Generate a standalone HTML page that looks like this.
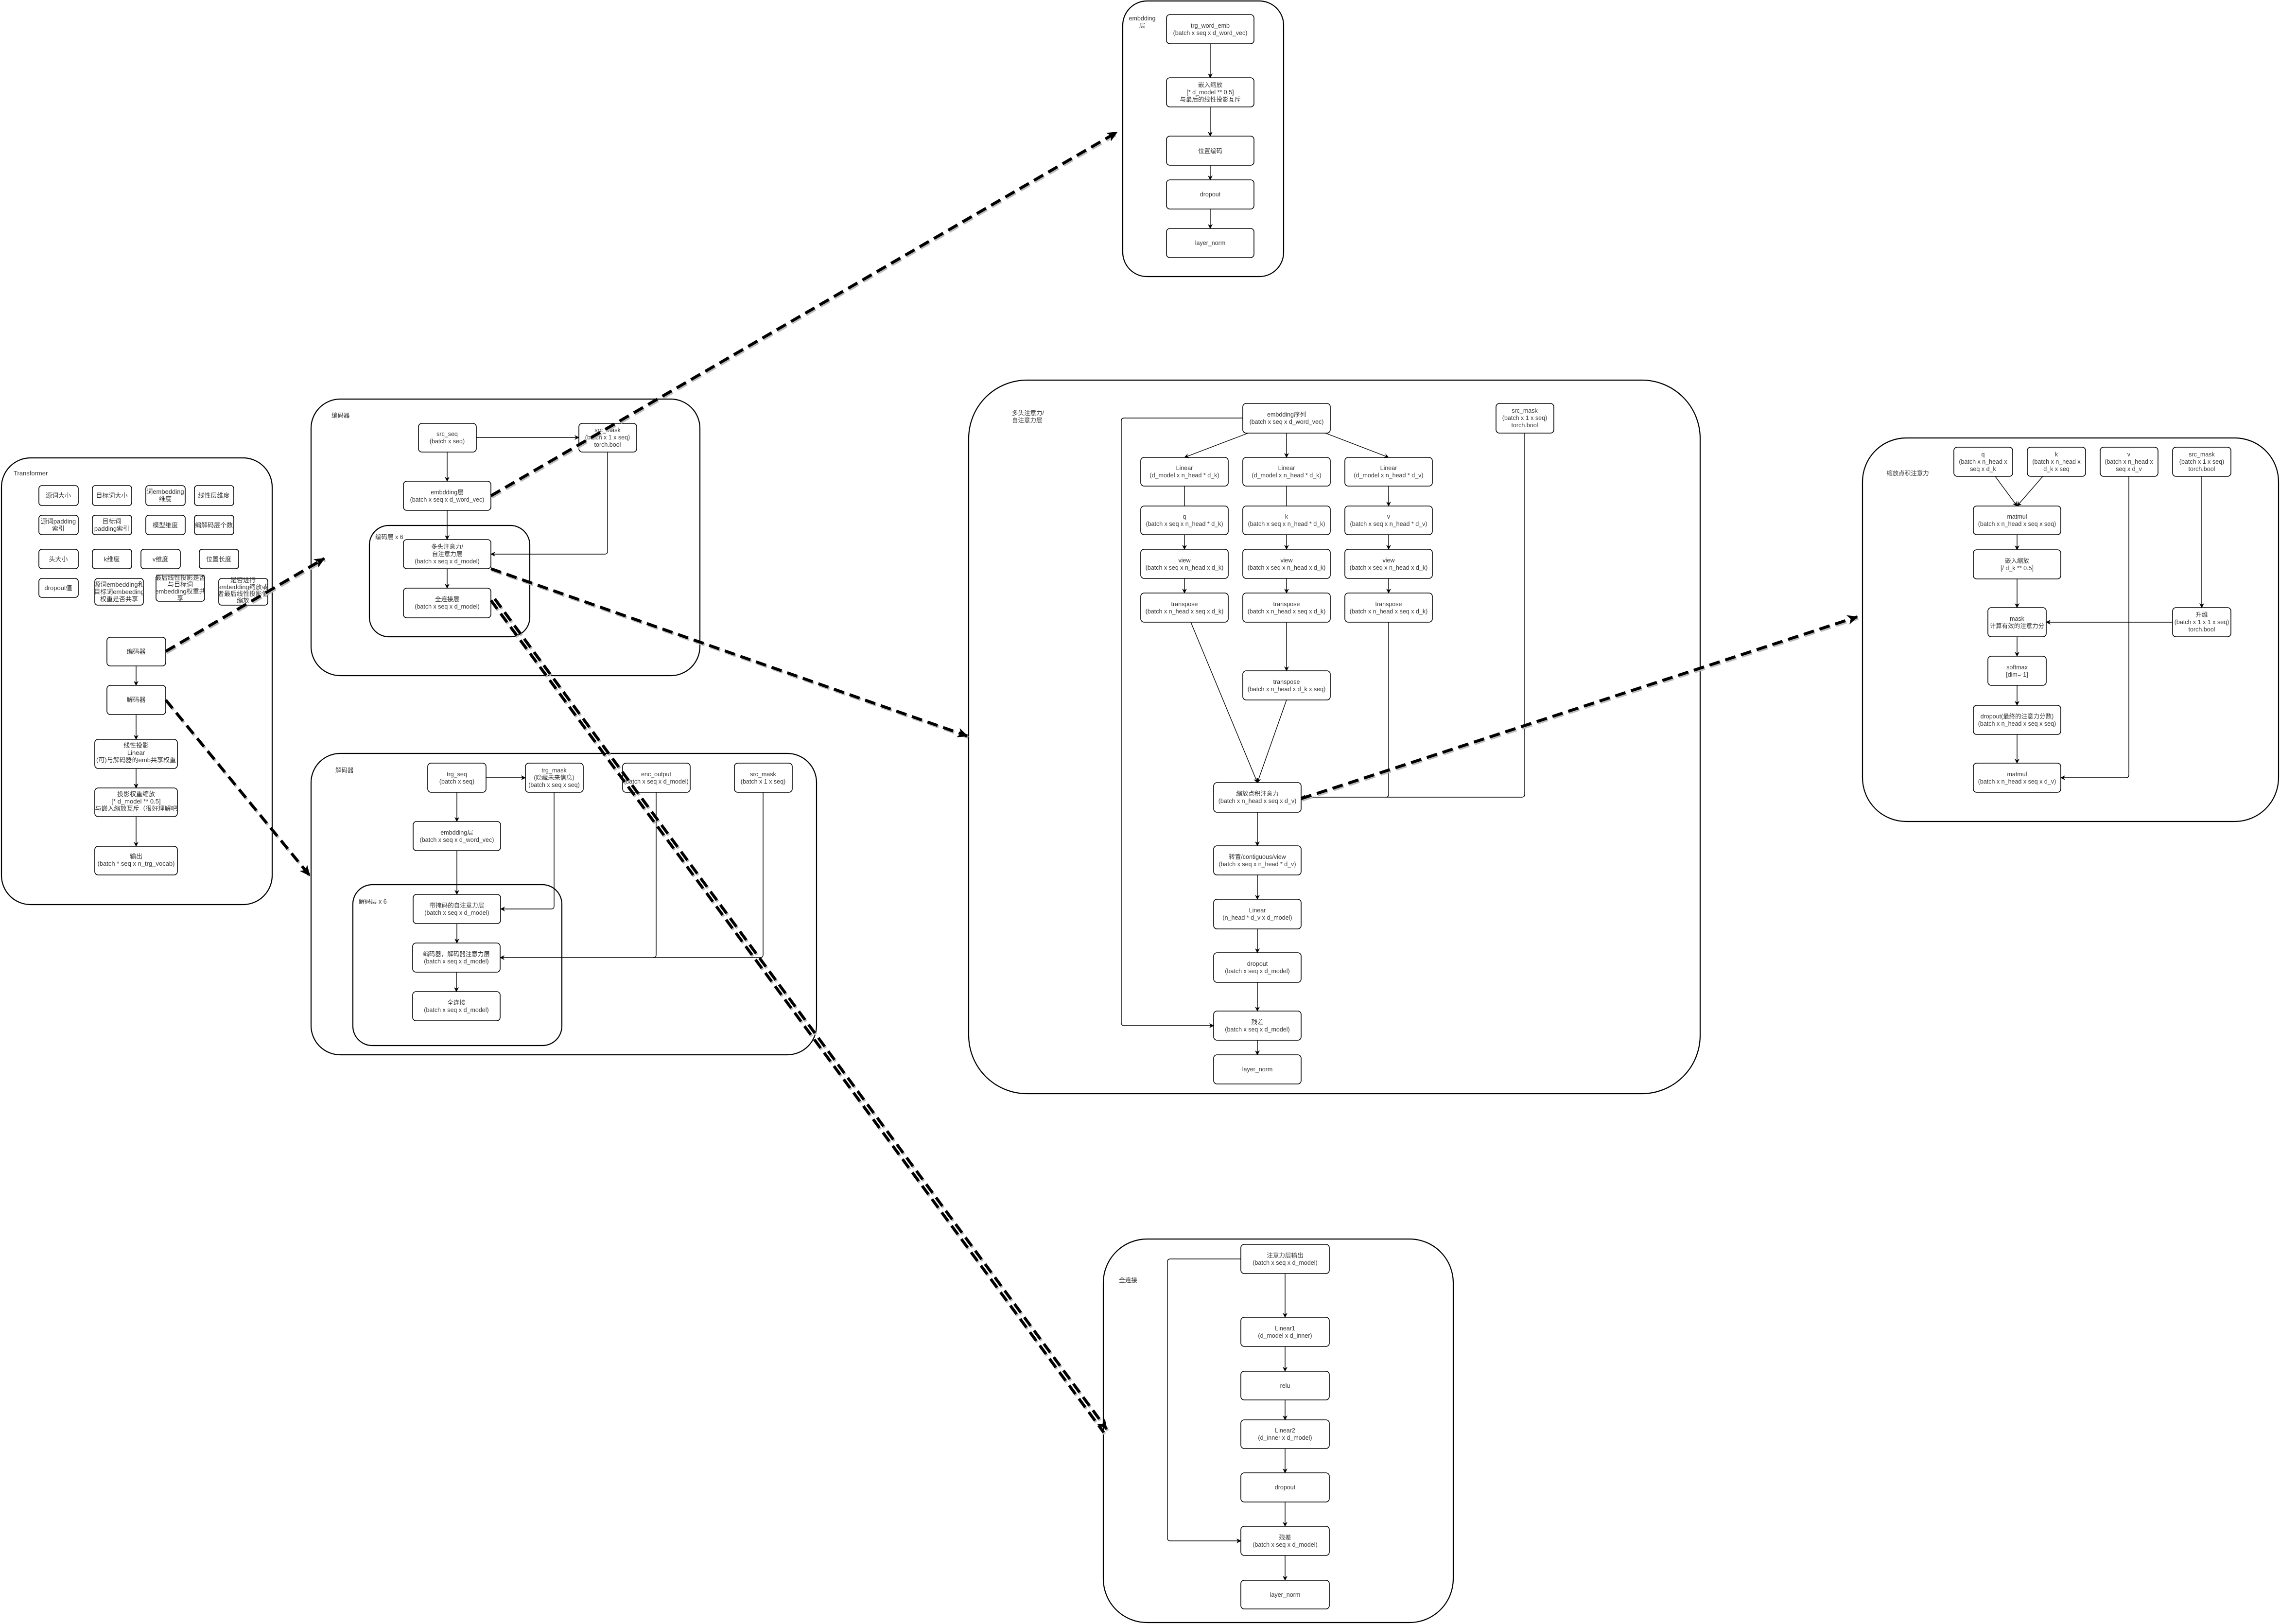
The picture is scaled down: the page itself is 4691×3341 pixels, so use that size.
<!DOCTYPE html>
<html><head><meta charset="utf-8">
<style>
html,body{margin:0;padding:0;background:#fff;}
svg{display:block;}
text{font-family:"Liberation Sans","Noto Sans CJK SC",sans-serif;fill:#333;}
.b{fill:#fff;stroke:#000;stroke-width:1.6;}
.p{fill:none;stroke:#000;stroke-width:2.2;}
.l{fill:none;stroke:#000;stroke-width:1.4;}
.d{fill:none;stroke:#000;stroke-width:6;stroke-dasharray:22 12;}
.ds{fill:none;stroke:#bbb;stroke-width:6;stroke-dasharray:22 12;}
</style></head><body>
<svg width="4691" height="3341" xmlns="http://www.w3.org/2000/svg">
<defs>
<marker id="a" markerWidth="10" markerHeight="10" refX="9" refY="5" orient="auto" markerUnits="userSpaceOnUse"><path d="M0,0 L10,5 L0,10 L3,5 z" fill="#000"/></marker>
<marker id="A" markerWidth="24" markerHeight="24" refX="20" refY="12" orient="auto" markerUnits="userSpaceOnUse"><path d="M0,2 L22,12 L0,22 L6,12 z" fill="#000"/></marker>
</defs>
<g font-size="12.5" text-anchor="middle">

<!-- Transformer panel -->
<rect class="p" x="3" y="942" width="557" height="919" rx="60"/>
<text x="28" y="978" text-anchor="start" font-size="13">Transformer</text>
<g font-size="13">
<rect class="b" x="80" y="999" width="81" height="41" rx="6"/><text x="120" y="1024">源词大小</text>
<rect class="b" x="190" y="999" width="81" height="41" rx="6"/><text x="230" y="1024">目标词大小</text>
<rect class="b" x="300" y="999" width="81" height="41" rx="6"/><text x="340" y="1016">词embedding</text><text x="340" y="1031">维度</text>
<rect class="b" x="400" y="999" width="81" height="41" rx="6"/><text x="440" y="1024">线性层维度</text>
<rect class="b" x="80" y="1060" width="81" height="40" rx="6"/><text x="120" y="1077">源词padding</text><text x="120" y="1092">索引</text>
<rect class="b" x="190" y="1060" width="81" height="40" rx="6"/><text x="230" y="1077">目标词</text><text x="230" y="1092">padding索引</text>
<rect class="b" x="300" y="1060" width="81" height="40" rx="6"/><text x="340" y="1085">模型维度</text>
<rect class="b" x="400" y="1060" width="81" height="40" rx="6"/><text x="440" y="1085">编解码层个数</text>
<rect class="b" x="80" y="1130" width="81" height="40" rx="6"/><text x="120" y="1155">头大小</text>
<rect class="b" x="190" y="1130" width="81" height="40" rx="6"/><text x="230" y="1155">k维度</text>
<rect class="b" x="290" y="1130" width="81" height="40" rx="6"/><text x="330" y="1155">v维度</text>
<rect class="b" x="410" y="1130" width="81" height="40" rx="6"/><text x="450" y="1155">位置长度</text>
<rect class="b" x="80" y="1190" width="81" height="39" rx="6"/><text x="120" y="1214">dropout值</text>
<rect class="b" x="195" y="1190" width="100" height="55" rx="6"/><text x="245" y="1207">源词embedding和</text><text x="245" y="1222">目标词embeeding</text><text x="245" y="1237">权重是否共享</text>
<rect class="b" x="321" y="1183" width="100" height="54" rx="6"/><text x="371" y="1193">最后线性投影是否</text><text x="371" y="1207">与目标词</text><text x="371" y="1221">embedding权重共</text><text x="371" y="1235">享</text>
<rect class="b" x="450" y="1190" width="101" height="55" rx="6"/><text x="500" y="1198">是否进行</text><text x="500" y="1212">embedding缩放或</text><text x="500" y="1226">者最后线性投影值</text><text x="500" y="1240">缩放</text>
<rect class="b" x="220" y="1311" width="121" height="59" rx="7"/><text x="280" y="1345">编码器</text>
<rect class="b" x="220" y="1410" width="121" height="60" rx="7"/><text x="280" y="1444">解码器</text>
<rect class="b" x="195" y="1521" width="170" height="60" rx="7"/><text x="280" y="1538">线性投影</text><text x="280" y="1553">Linear</text><text x="280" y="1568">(可)与解码器的emb共享权重</text>
<rect class="b" x="195" y="1621" width="170" height="59" rx="7"/><text x="280" y="1638">投影权重缩放</text><text x="280" y="1653">[* d_model ** 0.5]</text><text x="280" y="1668">与嵌入缩放互斥（很好理解吧</text>
<rect class="b" x="195" y="1741" width="170" height="59" rx="7"/><text x="280" y="1766">输出</text><text x="280" y="1781">(batch * seq x n_trg_vocab)</text>
</g>
<path class="l" marker-end="url(#a)" d="M280,1370 V1410"/>
<path class="l" marker-end="url(#a)" d="M280,1470 V1521"/>
<path class="l" marker-end="url(#a)" d="M280,1581 V1621"/>
<path class="l" marker-end="url(#a)" d="M280,1680 V1741"/>

<!-- Encoder panel -->
<rect class="p" x="640" y="821" width="800" height="569" rx="60"/>
<text x="682" y="859" text-anchor="start">编码器</text>
<rect class="b" x="861" y="871" width="119" height="59" rx="7"/><text x="920" y="897">src_seq</text><text x="920" y="912">(batch x seq)</text>
<rect class="b" x="1191" y="871" width="119" height="59" rx="7"/><text x="1250" y="889">src_mask</text><text x="1250" y="904">(batch x 1 x seq)</text><text x="1250" y="919">torch.bool</text>
<rect class="b" x="830" y="990" width="180" height="60" rx="7"/><text x="920" y="1017">embdding层</text><text x="920" y="1032">(batch x seq x d_word_vec)</text>
<rect class="p" x="760" y="1081" width="330" height="229" rx="40"/>
<text x="772" y="1109" text-anchor="start">编码层 x 6</text>
<rect class="b" x="830" y="1110" width="180" height="60" rx="7"/><text x="920" y="1129">多头注意力/</text><text x="920" y="1144">自注意力层</text><text x="920" y="1159">(batch x seq x d_model)</text>
<rect class="b" x="830" y="1210" width="180" height="61" rx="7"/><text x="920" y="1237">全连接层</text><text x="920" y="1252">(batch x seq x d_model)</text>
<path class="l" marker-end="url(#a)" d="M980,900 H1191"/>
<path class="l" marker-end="url(#a)" d="M920,930 V990"/>
<path class="l" marker-end="url(#a)" d="M920,1050 V1110"/>
<path class="l" marker-end="url(#a)" d="M1250,930 V1134 Q1250,1140 1244,1140 H1010"/>
<path class="l" marker-end="url(#a)" d="M920,1170 V1210"/>

<!-- Decoder panel -->
<rect class="p" x="640" y="1550" width="1040" height="620" rx="60"/>
<text x="690" y="1589" text-anchor="start">解码器</text>
<rect class="b" x="880" y="1570" width="120" height="60" rx="7"/><text x="940" y="1597">trg_seq</text><text x="940" y="1612">(batch x seq)</text>
<rect class="b" x="1081" y="1570" width="119" height="60" rx="7"/><text x="1140" y="1589">trg_mask</text><text x="1140" y="1604">(隐藏未来信息)</text><text x="1140" y="1619">(batch x seq x seq)</text>
<rect class="b" x="1281" y="1570" width="139" height="60" rx="7"/><text x="1350" y="1597">enc_output</text><text x="1350" y="1612">(batch x seq x d_model)</text>
<rect class="b" x="1511" y="1570" width="119" height="60" rx="7"/><text x="1570" y="1597">src_mask</text><text x="1570" y="1612">(batch x 1 x seq)</text>
<rect class="b" x="850" y="1690" width="180" height="60" rx="7"/><text x="940" y="1717">embdding层</text><text x="940" y="1732">(batch x seq x d_word_vec)</text>
<rect class="p" x="726" y="1820" width="430" height="331" rx="40"/>
<text x="738" y="1859" text-anchor="start">解码层 x 6</text>
<rect class="b" x="850" y="1840" width="180" height="60" rx="7"/><text x="940" y="1867">带掩码的自注意力层</text><text x="940" y="1882">(batch x seq x d_model)</text>
<rect class="b" x="849" y="1940" width="180" height="60" rx="7"/><text x="939" y="1967">编码器，解码器注意力层</text><text x="939" y="1982">(batch x seq x d_model)</text>
<rect class="b" x="849" y="2040" width="180" height="60" rx="7"/><text x="939" y="2067">全连接</text><text x="939" y="2082">(batch x seq x d_model)</text>
<path class="l" marker-end="url(#a)" d="M1000,1600 H1081"/>
<path class="l" marker-end="url(#a)" d="M940,1630 V1690"/>
<path class="l" marker-end="url(#a)" d="M940,1750 V1840"/>
<path class="l" marker-end="url(#a)" d="M1140,1630 V1864 Q1140,1870 1134,1870 H1030"/>
<path class="l" marker-end="url(#a)" d="M940,1900 V1940"/>
<path class="l" d="M1350,1630 V1964 Q1350,1970 1344,1970"/>
<path class="l" marker-end="url(#a)" d="M1570,1630 V1964 Q1570,1970 1564,1970 H1029"/>
<path class="l" marker-end="url(#a)" d="M939,2000 V2040"/>

<!-- Embedding panel -->
<rect class="p" x="2310" y="2" width="331" height="567" rx="50"/>
<text x="2350" y="42">embdding</text><text x="2350" y="57">层</text>
<rect class="b" x="2400" y="30" width="180" height="60" rx="7"/><text x="2490" y="57">trg_word_emb</text><text x="2490" y="72">(batch x seq x d_word_vec)</text>
<rect class="b" x="2400" y="160" width="180" height="60" rx="7"/><text x="2490" y="179">嵌入缩放</text><text x="2490" y="194">[* d_model ** 0.5]</text><text x="2490" y="209">与最后的线性投影互斥</text>
<rect class="b" x="2400" y="280" width="180" height="60" rx="7"/><text x="2490" y="315">位置编码</text>
<rect class="b" x="2400" y="370" width="180" height="60" rx="7"/><text x="2490" y="404">dropout</text>
<rect class="b" x="2400" y="470" width="180" height="60" rx="7"/><text x="2490" y="504">layer_norm</text>
<path class="l" marker-end="url(#a)" d="M2490,90 V160"/>
<path class="l" marker-end="url(#a)" d="M2490,220 V280"/>
<path class="l" marker-end="url(#a)" d="M2490,340 V370"/>
<path class="l" marker-end="url(#a)" d="M2490,430 V470"/>

<!-- Multihead panel -->
<rect class="p" x="1993" y="782" width="1505" height="1468" rx="120"/>
<text x="2082" y="854" text-anchor="start">多头注意力/</text>
<text x="2082" y="869" text-anchor="start">自注意力层</text>
<rect class="b" x="2557" y="830" width="180" height="61" rx="7"/><text x="2647" y="857">embdding序列</text><text x="2647" y="872">(batch x seq x d_word_vec)</text>
<rect class="b" x="3078" y="830" width="119" height="61" rx="7"/><text x="3137" y="849">src_mask</text><text x="3137" y="864">(batch x 1 x seq)</text><text x="3137" y="879">torch.bool</text>
<rect class="b" x="2347" y="941" width="180" height="59" rx="7"/><text x="2437" y="967">Linear</text><text x="2437" y="982">(d_model x n_head * d_k)</text>
<rect class="b" x="2557" y="941" width="180" height="59" rx="7"/><text x="2647" y="967">Linear</text><text x="2647" y="982">(d_model x n_head * d_k)</text>
<rect class="b" x="2767" y="941" width="180" height="59" rx="7"/><text x="2857" y="967">Linear</text><text x="2857" y="982">(d_model x n_head * d_v)</text>
<rect class="b" x="2347" y="1041" width="180" height="59" rx="7"/><text x="2437" y="1067">q</text><text x="2437" y="1082">(batch x seq x n_head * d_k)</text>
<rect class="b" x="2557" y="1041" width="180" height="59" rx="7"/><text x="2647" y="1067">k</text><text x="2647" y="1082">(batch x seq x n_head * d_k)</text>
<rect class="b" x="2767" y="1041" width="180" height="59" rx="7"/><text x="2857" y="1067">v</text><text x="2857" y="1082">(batch x seq x n_head * d_v)</text>
<rect class="b" x="2347" y="1130" width="180" height="60" rx="7"/><text x="2437" y="1157">view</text><text x="2437" y="1172">(batch x seq x n_head x d_k)</text>
<rect class="b" x="2557" y="1130" width="180" height="60" rx="7"/><text x="2647" y="1157">view</text><text x="2647" y="1172">(batch x seq x n_head x d_k)</text>
<rect class="b" x="2767" y="1130" width="180" height="60" rx="7"/><text x="2857" y="1157">view</text><text x="2857" y="1172">(batch x seq x n_head x d_k)</text>
<rect class="b" x="2347" y="1220" width="180" height="60" rx="7"/><text x="2437" y="1247">transpose</text><text x="2437" y="1262">(batch x n_head x seq x d_k)</text>
<rect class="b" x="2557" y="1220" width="180" height="60" rx="7"/><text x="2647" y="1247">transpose</text><text x="2647" y="1262">(batch x n_head x seq x d_k)</text>
<rect class="b" x="2767" y="1220" width="180" height="60" rx="7"/><text x="2857" y="1247">transpose</text><text x="2857" y="1262">(batch x n_head x seq x d_k)</text>
<rect class="b" x="2557" y="1380" width="180" height="60" rx="7"/><text x="2647" y="1407">transpose</text><text x="2647" y="1422">(batch x n_head x d_k x seq)</text>
<rect class="b" x="2497" y="1610" width="180" height="61" rx="7"/><text x="2587" y="1637">缩放点积注意力</text><text x="2587" y="1652">(batch x n_head x seq x d_v)</text>
<rect class="b" x="2497" y="1740" width="180" height="60" rx="7"/><text x="2587" y="1767">转置/contiguous/view</text><text x="2587" y="1782">(batch x seq x n_head * d_v)</text>
<rect class="b" x="2497" y="1850" width="180" height="61" rx="7"/><text x="2587" y="1877">Linear</text><text x="2587" y="1892">(n_head * d_v x d_model)</text>
<rect class="b" x="2497" y="1960" width="180" height="61" rx="7"/><text x="2587" y="1987">dropout</text><text x="2587" y="2002">(batch x seq x d_model)</text>
<rect class="b" x="2497" y="2080" width="180" height="60" rx="7"/><text x="2587" y="2107">残差</text><text x="2587" y="2122">(batch x seq x d_model)</text>
<rect class="b" x="2497" y="2170" width="180" height="60" rx="7"/><text x="2587" y="2204">layer_norm</text>
<path class="l" marker-end="url(#a)" d="M2568,891 L2437,941"/>
<path class="l" marker-end="url(#a)" d="M2647,891 V941"/>
<path class="l" marker-end="url(#a)" d="M2727,891 L2857,941"/>
<path class="l" marker-end="url(#a)" d="M2437,1000 V1041 M2647,1000 V1041 M2857,1000 V1041"/>
<path class="l" marker-end="url(#a)" d="M2437,1100 V1130"/>
<path class="l" marker-end="url(#a)" d="M2647,1100 V1130"/>
<path class="l" marker-end="url(#a)" d="M2857,1100 V1130"/>
<path class="l" marker-end="url(#a)" d="M2437,1190 V1220"/>
<path class="l" marker-end="url(#a)" d="M2647,1190 V1220"/>
<path class="l" marker-end="url(#a)" d="M2857,1190 V1220"/>
<path class="l" marker-end="url(#a)" d="M2647,1280 V1380"/>
<path class="l" marker-end="url(#a)" d="M2450,1280 L2587,1610"/>
<path class="l" marker-end="url(#a)" d="M2647,1440 L2587,1610"/>
<path class="l" d="M2857,1280 V1634 Q2857,1640 2851,1640"/>
<path class="l" marker-end="url(#a)" d="M3137,891 V1634 Q3137,1640 3131,1640 H2677"/>
<path class="l" marker-end="url(#a)" d="M2557,860 H2313 Q2307,860 2307,866 V2104 Q2307,2110 2313,2110 H2497"/>
<path class="l" marker-end="url(#a)" d="M2587,1671 V1740"/>
<path class="l" marker-end="url(#a)" d="M2587,1800 V1850"/>
<path class="l" marker-end="url(#a)" d="M2587,1911 V1960"/>
<path class="l" marker-end="url(#a)" d="M2587,2021 V2080"/>
<path class="l" marker-end="url(#a)" d="M2587,2140 V2170"/>

<!-- Scaled dot product panel -->
<rect class="p" x="3832" y="901" width="856" height="789" rx="90"/>
<text x="3925" y="978">缩放点积注意力</text>
<rect class="b" x="4020" y="920" width="121" height="60" rx="7"/><text x="4080" y="939">q</text><text x="4080" y="954">(batch x n_head x</text><text x="4080" y="969">seq  x d_k</text>
<rect class="b" x="4171" y="920" width="120" height="60" rx="7"/><text x="4231" y="939">k</text><text x="4231" y="954">(batch x n_head x</text><text x="4231" y="969">d_k x seq</text>
<rect class="b" x="4321" y="920" width="119" height="60" rx="7"/><text x="4380" y="939">v</text><text x="4380" y="954">(batch x n_head x</text><text x="4380" y="969">seq x d_v</text>
<rect class="b" x="4470" y="920" width="120" height="60" rx="7"/><text x="4530" y="939">src_mask</text><text x="4530" y="954">(batch x 1 x seq)</text><text x="4530" y="969">torch.bool</text>
<rect class="b" x="4060" y="1041" width="180" height="59" rx="7"/><text x="4150" y="1067">matmul</text><text x="4150" y="1082">(batch x n_head x seq x seq)</text>
<rect class="b" x="4060" y="1131" width="180" height="60" rx="7"/><text x="4150" y="1158">嵌入缩放</text><text x="4150" y="1173">[/ d_k ** 0.5]</text>
<rect class="b" x="4090" y="1250" width="120" height="60" rx="7"/><text x="4150" y="1277">mask</text><text x="4150" y="1292">计算有效的注意力分</text>
<rect class="b" x="4470" y="1250" width="120" height="60" rx="7"/><text x="4530" y="1269">升维</text><text x="4530" y="1284">(batch x 1 x 1 x seq)</text><text x="4530" y="1299">torch.bool</text>
<rect class="b" x="4090" y="1350" width="120" height="60" rx="7"/><text x="4150" y="1377">softmax</text><text x="4150" y="1392">[dim=-1]</text>
<rect class="b" x="4060" y="1451" width="180" height="60" rx="7"/><text x="4150" y="1478">dropout(最终的注意力分数)</text><text x="4150" y="1493">(batch x n_head x seq x seq)</text>
<rect class="b" x="4060" y="1570" width="180" height="60" rx="7"/><text x="4150" y="1597">matmul</text><text x="4150" y="1612">(batch x n_head x seq x d_v)</text>
<path class="l" marker-end="url(#a)" d="M4105,980 L4150,1041"/>
<path class="l" marker-end="url(#a)" d="M4203,980 L4150,1041"/>
<path class="l" marker-end="url(#a)" d="M4150,1100 V1131"/>
<path class="l" marker-end="url(#a)" d="M4150,1191 V1250"/>
<path class="l" marker-end="url(#a)" d="M4150,1310 V1350"/>
<path class="l" marker-end="url(#a)" d="M4150,1410 V1451"/>
<path class="l" marker-end="url(#a)" d="M4150,1511 V1570"/>
<path class="l" marker-end="url(#a)" d="M4530,980 V1250"/>
<path class="l" marker-end="url(#a)" d="M4470,1280 H4210"/>
<path class="l" marker-end="url(#a)" d="M4380,980 V1594 Q4380,1600 4374,1600 H4240"/>

<!-- FFN panel -->
<rect class="p" x="2270" y="2549" width="720" height="789" rx="90"/>
<text x="2321" y="2638">全连接</text>
<rect class="b" x="2553" y="2560" width="182" height="60" rx="7"/><text x="2644" y="2587">注意力层输出</text><text x="2644" y="2602">(batch x seq x d_model)</text>
<rect class="b" x="2553" y="2710" width="182" height="60" rx="7"/><text x="2644" y="2737">Linear1</text><text x="2644" y="2752">(d_model x d_inner)</text>
<rect class="b" x="2553" y="2821" width="182" height="59" rx="7"/><text x="2644" y="2855">relu</text>
<rect class="b" x="2553" y="2921" width="182" height="59" rx="7"/><text x="2644" y="2947">Linear2</text><text x="2644" y="2962">(d_inner x d_model)</text>
<rect class="b" x="2553" y="3030" width="182" height="60" rx="7"/><text x="2644" y="3064">dropout</text>
<rect class="b" x="2553" y="3140" width="182" height="60" rx="7"/><text x="2644" y="3167">残差</text><text x="2644" y="3182">(batch x seq x d_model)</text>
<rect class="b" x="2553" y="3251" width="182" height="59" rx="7"/><text x="2644" y="3285">layer_norm</text>
<path class="l" marker-end="url(#a)" d="M2644,2620 V2710"/>
<path class="l" marker-end="url(#a)" d="M2644,2770 V2821"/>
<path class="l" marker-end="url(#a)" d="M2644,2880 V2921"/>
<path class="l" marker-end="url(#a)" d="M2644,2980 V3030"/>
<path class="l" marker-end="url(#a)" d="M2644,3090 V3140"/>
<path class="l" marker-end="url(#a)" d="M2644,3200 V3251"/>
<path class="l" marker-end="url(#a)" d="M2553,2590 H2408 Q2402,2590 2402,2596 V3164 Q2402,3170 2408,3170 H2553"/>

<!-- Dashed connectors -->
<g transform="translate(2,3)">
<path class="ds" d="M341,1340 L667,1149"/>
<path class="ds" d="M341,1440 L637,1801"/>
<path class="ds" d="M1010,1020 L2298,272"/>
<path class="ds" d="M1010,1170 L1990,1514"/>
<path class="ds" d="M1010,1235 L2271,2947"/>
<path class="ds" d="M1018,1232 L2277,2940"/>
<path class="ds" d="M2677,1643 L3821,1269"/>
</g>
<path class="d" marker-end="url(#A)" d="M341,1340 L667,1149"/>
<path class="d" marker-end="url(#A)" d="M341,1440 L637,1801"/>
<path class="d" marker-end="url(#A)" d="M1010,1020 L2298,272"/>
<path class="d" marker-end="url(#A)" d="M1010,1170 L1990,1514"/>
<path class="d" stroke-width="4" d="M1010,1235 L2271,2947"/>
<path class="d" stroke-width="4" marker-end="url(#A)" d="M1018,1232 L2277,2940"/>
<path class="d" marker-end="url(#A)" d="M2677,1643 L3821,1269"/>
</g>
</svg>
</body></html>
